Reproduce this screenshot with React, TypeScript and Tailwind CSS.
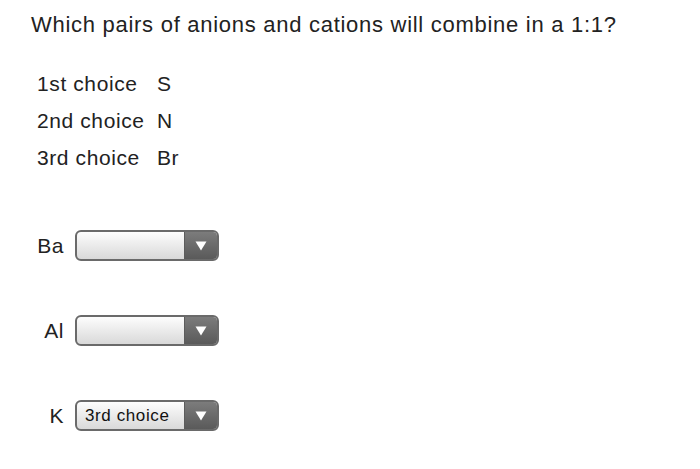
import React from 'react';

const choices = [
  { label: '1st choice', value: 'S' },
  { label: '2nd choice', value: 'N' },
  { label: '3rd choice', value: 'Br' },
];

const rows = [
  { ion: 'Ba', selected: '' },
  { ion: 'Al', selected: '' },
  { ion: 'K', selected: '3rd choice' },
];

const Dropdown = ({ selected }: { selected: string }) => (
  <div className="flex h-[31px] w-[144px] overflow-hidden rounded-[6px] border-2 border-[#6a6a6a] bg-gradient-to-b from-[#fdfdfd] to-[#d9d9d9]">
    <div className="flex flex-1 items-center pl-[8px] text-[17px] leading-none tracking-[0.6px] text-[#111111]">
      {selected}
    </div>
    <div className="flex w-[33px] items-center justify-center border-l border-[#5c5c5c] bg-gradient-to-b from-[#7c7c7c] to-[#5a5a5a]">
      <svg width="12" height="10" viewBox="0 0 12 10">
        <path d="M0.5 0.5 H11.5 L6 9.5 Z" fill="#ffffff" />
      </svg>
    </div>
  </div>
);

export default function App() {
  return (
    <div className="min-h-[469px] w-[700px] bg-white pl-[31px] pt-[12px] text-[#222222] [font-family:'Liberation_Sans',Arial,sans-serif]">
      <h1 className="text-[22px] leading-[25px] tracking-[0.72px]">
        Which pairs of anions and cations will combine in a 1:1?
      </h1>

      <div className="mt-[28px] pl-[6px]">
        {choices.map((c) => (
          <div key={c.label} className="grid grid-cols-[120px_auto] text-[21px] leading-[37px] tracking-[0.6px]">
            <span>{c.label}</span>
            <span>{c.value}</span>
          </div>
        ))}
      </div>

      <div className="mt-[54px] flex flex-col gap-[54px]">
        {rows.map((r) => (
          <div key={r.ion} className="flex items-center gap-[11px]">
            <span className="w-[33px] text-right text-[21px] leading-none tracking-[0.5px]">{r.ion}</span>
            <Dropdown selected={r.selected} />
          </div>
        ))}
      </div>
    </div>
  );
}
